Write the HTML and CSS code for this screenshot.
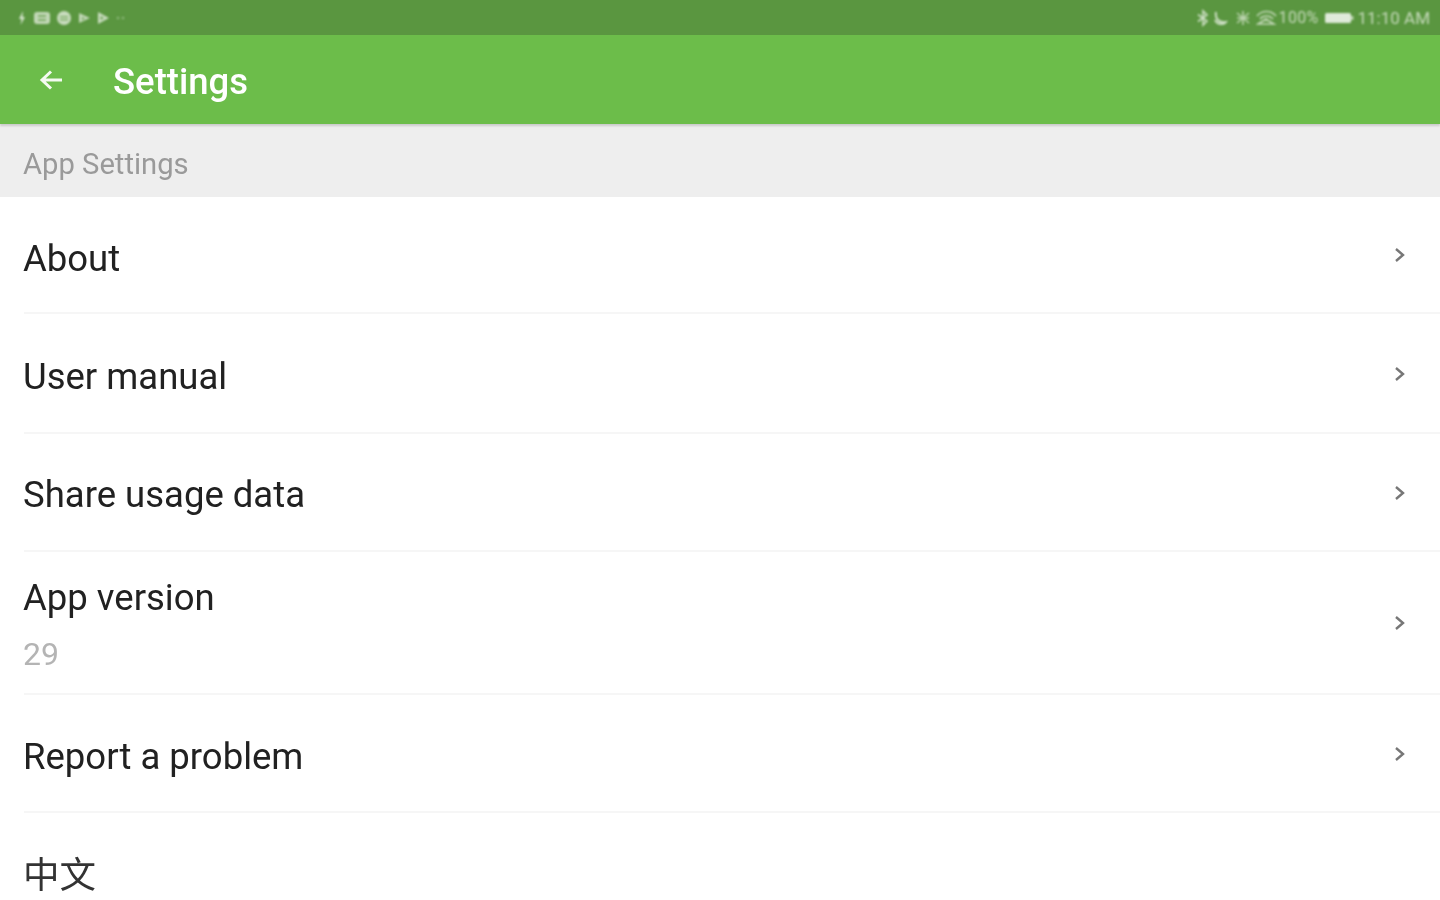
FILE: index.html
```html
<!DOCTYPE html>
<html>
<head>
<meta charset="utf-8">
<title>Settings</title>
<link rel="stylesheet" href="styles.css">
</head>
<body>
<div class="statusbar">
  <div class="statusicons">
    <svg width="12" height="18" viewBox="0 0 12 18"><path d="M7 2 3 10h2.500L4.500 16 9 8H6.500z" fill="#d5e4cd"/></svg>
    <svg width="18" height="18" viewBox="0 0 18 18"><rect x="1" y="3" width="16" height="12" rx="3" fill="#c3d8b8"/><rect x="5" y="6" width="8" height="2" fill="#7fae69"/><rect x="5" y="10" width="8" height="2" fill="#7fae69"/></svg>
    <svg width="16" height="18" viewBox="0 0 16 18"><circle cx="8" cy="9" r="7" fill="#c9dcbf"/><rect x="4" y="7" width="8" height="1.500" fill="#7fae69"/><rect x="4" y="10" width="8" height="1.500" fill="#7fae69"/></svg>
    <svg width="14" height="18" viewBox="0 0 14 18"><path d="M2 4 13 9 2 14z" fill="#c3d8b8"/><path d="M5 8 8 9.500 5 11z" fill="#6fa258"/></svg>
    <svg width="14" height="18" viewBox="0 0 14 18"><path d="M2 3 13 9 2 15z" fill="#c9dcbf"/><path d="M4.500 7 8 9 4.500 11z" fill="#6fa258"/></svg>
    <svg class="dots" width="12" height="18" viewBox="0 0 12 18"><circle cx="3" cy="9" r="1.300" fill="#8fb97c"/><circle cx="8" cy="9" r="1.300" fill="#8fb97c"/></svg>
  </div>
  <div class="statusright">
    <svg width="14" height="18" viewBox="0 0 14 18" fill="none" stroke="#cfe0c6" stroke-width="1.600"><path d="M2 5.500 11 12 7 16V2l4 4-9 6.500"/></svg>
    <svg width="16" height="18" viewBox="0 0 16 18" fill="none" stroke="#cfe0c6" stroke-width="2"><path d="M4 3c-1 6 2 11 10 10-2 3-9 3-11-2"/></svg>
    <svg class="gapicon" width="18" height="18" viewBox="0 0 18 18" fill="none" stroke="#bcd4af" stroke-width="1.600"><path d="M3 4 15 14M15 4 3 14M9 2v14M3 9h12"/></svg>
    <svg class="wifi" width="21" height="18" viewBox="0 0 21 18" fill="none" stroke="#c3d8b8" stroke-width="1.600"><path d="M1 7C6 1 15 1 20 7M4 10c3-4 10-4 13 0M2 15l8-5 8 5z"/></svg>
    <span class="pct">100%</span>
    <svg class="battery" width="29" height="18" viewBox="0 0 29 18"><rect x="0" y="4" width="26" height="10" rx="1.500" fill="#dfeada"/><rect x="26" y="7" width="2.500" height="4" fill="#b9d1ac"/></svg>
    <span class="clock">11:10 AM</span>
  </div>
</div>

<div class="toolbar">
  <svg class="backarrow" width="26" height="26" viewBox="0 0 26 26" fill="none" stroke="#f4faf1" stroke-width="3"><path d="M24 13H4M13 4.500 4 13l9 8.500"/></svg>
  <div class="title">Settings</div>
</div>

<div class="sectionhead">App Settings</div>

<div class="list">
  <div class="row row1">
    <div class="rowlabel">About</div>
    <svg class="chevron" width="14" height="20" viewBox="0 0 14 20"><path d="M3 4l7 6-7 6" fill="none" stroke="#777" stroke-width="2.400"/></svg>
  </div>
  <div class="row row2">
    <div class="rowlabel">User manual</div>
    <svg class="chevron" width="14" height="20" viewBox="0 0 14 20"><path d="M3 4l7 6-7 6" fill="none" stroke="#777" stroke-width="2.400"/></svg>
  </div>
  <div class="row row3">
    <div class="rowlabel rowlabel3">Share usage data</div>
    <svg class="chevron" width="14" height="20" viewBox="0 0 14 20"><path d="M3 4l7 6-7 6" fill="none" stroke="#777" stroke-width="2.400"/></svg>
  </div>
  <div class="row row4">
    <div class="rowtext">
      <div class="rowlabel">App version</div>
      <div class="rowvalue">29</div>
    </div>
    <svg class="chevron" width="14" height="20" viewBox="0 0 14 20"><path d="M3 4l7 6-7 6" fill="none" stroke="#777" stroke-width="2.400"/></svg>
  </div>
  <div class="row row5">
    <div class="rowlabel">Report a problem</div>
    <svg class="chevron" width="14" height="20" viewBox="0 0 14 20"><path d="M3 4l7 6-7 6" fill="none" stroke="#777" stroke-width="2.400"/></svg>
  </div>
  <div class="row row6">
    <div class="rowlabel rowlabelcjk">中文</div>
  </div>
</div>
</body>
</html>
```

FILE: styles.css
```css
html, body
{
  width: 100%;
  height: 100%;
  margin: 0;
  padding: 0;
  overflow: hidden;
  background-color: white;
  font-family: Roboto, "Noto Sans CJK SC", sans-serif;
}

/* The reference is an upscaled capture, so everything is a little soft. */
.toolbar, .sectionhead, .list
{
  filter: blur(0.6px);
}

.statusbar
{
  display: flex;
  justify-content: space-between;
  align-items: center;
  height: 35px;
  padding: 0 10px 0 16px;
  background-color: #5a9640;
  color: #c6dabb;
  font-size: 17px;
}

.statusicons, .statusright
{
  display: flex;
  align-items: center;
  filter: blur(0.9px);
}

.statusicons
{
  gap: 5px;
}

.statusright
{
  gap: 2px;
}

.gapicon
{
  margin-left: 4px;
}

.wifi
{
  margin-left: 2px;
}

.pct
{
  font-size: 16px;
  letter-spacing: 0.3px;
}

.battery
{
  margin-left: 4px;
  margin-right: 2px;
}

.toolbar
{
  display: flex;
  align-items: center;
  height: 89px;
  padding-left: 38px;
  background-color: #6cbd4a;
  box-shadow: 0 2px 2px rgba(0, 0, 0, 0.15);
  position: relative;
  z-index: 1;
}

.backarrow
{
  margin-right: 49px;
}

.title
{
  font-size: 36.500px;
  font-weight: 500;
  color: white;
  margin-top: 3px;
}

.sectionhead
{
  display: flex;
  align-items: center;
  height: 73px;
  padding-top: 6px;
  padding-left: 23px;
  box-sizing: border-box;
  background-color: #eeeeee;
  color: #9a9a9a;
  font-size: 29.200px;
}

.row
{
  display: flex;
  justify-content: space-between;
  align-items: center;
  margin-left: 24px;
  padding-right: 33px;
  border-bottom: 2px solid #f6f6f6;
  box-sizing: border-box;
}

.row1 { height: 117px; }
.row2 { height: 120px; }
.row3 { height: 118px; }
.row4 { height: 143px; }
.row5 { height: 118px; }
.row6 { height: 120px; border-bottom: none; }

.rowtext
{
  margin-bottom: 3px;
}

.rowlabel
{
  margin-top: 7px;
  margin-left: -1px;
  font-size: 36.500px;
  color: #212121;
}

.rowlabel3
{
  margin-top: 5px;
}

.rowlabelcjk
{
  margin-top: -2px;
  color: #333333;
}

.rowvalue
{
  margin-top: 16px;
  margin-left: -1px;
  font-size: 32px;
  color: #b4b4b4;
}

.chevron
{
  display: block;
  margin-top: 1px;
}
```
